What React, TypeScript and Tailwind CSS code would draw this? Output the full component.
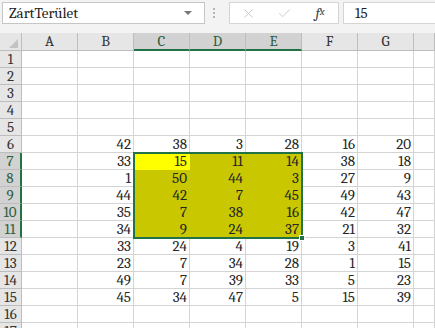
import { Check, X } from "lucide-react";

const COLS = ["A", "B", "C", "D", "E", "F", "G", ""];

// values for columns B..G, keyed by row number
const DATA: Record<number, number[]> = {
  6: [42, 38, 3, 28, 16, 20],
  7: [33, 15, 11, 14, 38, 18],
  8: [1, 50, 44, 3, 27, 9],
  9: [44, 42, 7, 45, 49, 43],
  10: [35, 7, 38, 16, 42, 47],
  11: [34, 9, 24, 37, 21, 32],
  12: [33, 24, 4, 19, 3, 41],
  13: [23, 7, 34, 28, 1, 15],
  14: [49, 7, 39, 33, 5, 23],
  15: [45, 34, 47, 5, 15, 39],
};

const ROWS = Array.from({ length: 17 }, (_, i) => i + 1);

const inSelection = (row: number, col: number) => row >= 7 && row <= 11 && col >= 2 && col <= 4;

function Toolbar() {
  return (
    <div className="flex h-[33px] items-start pl-[2px] pt-[2px]">
      <div className="flex h-[22px] w-[203px] items-center justify-between border border-[#c6c6c6] bg-white pl-[6px] pr-[12px] text-[15px] text-[#222]">
        <span>ZártTerület</span>
        <span className="h-0 w-0 border-x-[4px] border-t-[4px] border-x-transparent border-t-[#777]" />
      </div>
      <div className="flex h-[22px] w-[24px] flex-col items-center justify-center gap-[2px] pr-[6px]">
        <span className="h-[2px] w-[2px] bg-[#b5b5b5]" />
        <span className="h-[2px] w-[2px] bg-[#b5b5b5]" />
        <span className="h-[2px] w-[2px] bg-[#b5b5b5]" />
      </div>
      <div className="flex h-[22px] w-[110px] items-center border border-[#d4d4d4] bg-white">
        <span className="flex w-[36px] justify-center text-[#c4c4c4]">
          <X size={15} strokeWidth={1.4} />
        </span>
        <span className="flex w-[36px] justify-center text-[#c4c4c4]">
          <Check size={15} strokeWidth={1.4} />
        </span>
        <span className="flex w-[36px] justify-center text-[15px] italic text-[#444]">
          f<span className="mt-[4px] text-[11px] leading-none">x</span>
        </span>
      </div>
      <div className="ml-[4px] flex h-[22px] flex-1 items-center border border-r-0 border-[#d4d4d4] bg-white pl-[11px] text-[15px] text-[#222]">
        15
      </div>
    </div>
  );
}

export default function App() {
  return (
    <div className="h-[328px] w-[435px] overflow-hidden bg-[#f3f3f3] font-serif [font-family:'Liberation_Serif','Times_New_Roman',Tinos,'DejaVu_Serif',serif]">
      <Toolbar />
      <div className="relative grid grid-cols-[22px_repeat(7,56px)_1fr] bg-white">
        <div className="relative h-[18px] border-b border-r border-[#bdbdbd] bg-[#e6e6e6]">
          <span className="absolute bottom-[2px] right-[3px] h-0 w-0 border-b-[9px] border-l-[9px] border-b-[#c3c3c3] border-l-transparent" />
        </div>
        {COLS.map((c, i) => {
          const sel = i >= 2 && i <= 4;
          return (
            <div
              key={`h${i}`}
              className={`flex h-[18px] items-center justify-center border-r text-[15px] ${
                sel
                  ? "border-b-2 border-r-[#bdbdbd] border-b-[#217346] bg-[#d2d2d2] text-[#2e5e40]"
                  : "border-b border-[#bdbdbd] bg-[#e6e6e6] text-[#333]"
              }`}
            >
              {c}
            </div>
          );
        })}
        {ROWS.map((r) => {
          const rowSel = r >= 7 && r <= 11;
          const vals = DATA[r];
          return [
            <div
              key={`r${r}`}
              className={`flex h-[17px] items-center justify-center border-b text-[15px] ${
                rowSel
                  ? "border-r-2 border-b-[#bdbdbd] border-r-[#217346] bg-[#d2d2d2] text-[#2e5e40]"
                  : "border-r border-[#bdbdbd] bg-[#e6e6e6] text-[#333]"
              }`}
            >
              {r}
            </div>,
            ...COLS.map((_, ci) => {
              const v = vals && ci >= 1 && ci <= 6 ? vals[ci - 1] : null;
              const sel = inSelection(r, ci);
              const active = r === 7 && ci === 2;
              return (
                <div
                  key={`c${r}-${ci}`}
                  className={`flex h-[17px] items-center justify-end border-b border-r pr-[2px] text-[15px] leading-none text-[#262626] ${
                    active
                      ? "border-transparent bg-[#ffff00]"
                      : sel
                        ? "border-transparent bg-[#c9c800]"
                        : "border-[#d4d4d4]"
                  }`}
                >
                  {v}
                </div>
              );
            }),
          ];
        })}
        <div className="pointer-events-none absolute left-[133px] top-[119px] h-[87px] w-[170px] border-2 border-[#217346]" />
        <div className="absolute left-[299px] top-[202px] h-[6px] w-[6px] border border-white bg-[#217346]" />
      </div>
    </div>
  );
}
